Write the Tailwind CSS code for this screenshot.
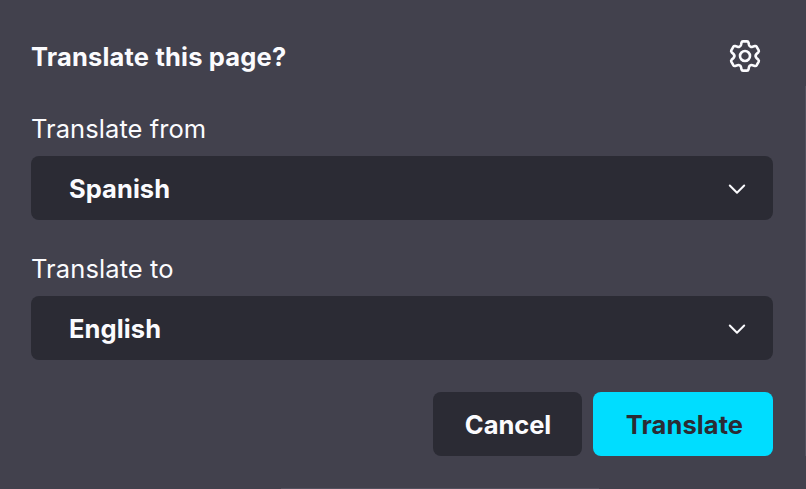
<!DOCTYPE html>
<html lang="en">
<head>
<meta charset="utf-8">
<title>Translate this page?</title>
<script src="https://cdn.jsdelivr.net/npm/@tailwindcss/browser@4"></script>
</head>
<body class="bg-[#42414d] font-['Inter',sans-serif] text-[#fbfbfe] text-[25.5px] leading-8">
<main class="relative flex h-[489px] w-[806px] flex-col overflow-hidden pl-[31px] pr-[33px]">
  <header class="flex h-[112px] items-center justify-between pr-3">
    <h1 class="pt-0.5 text-[25.5px] font-bold tracking-[0.18px]">Translate this page?</h1>
    <button aria-label="Settings" class="size-8">
      <svg class="size-8" viewBox="-16 -16 32 32" fill="none" stroke="currentColor" stroke-width="2.6" stroke-linejoin="round">
        <circle r="5"/>
        <path d="M-2 -14.6H2Q3.2 -14.6 3.5 -13.4L4 -11Q4.3 -9.8 5.6 -9.3Q6.5 -8.9 7.5 -9.2L9.9 -9.9Q11 -10.2 11.7 -9.2L13.7 -5.6Q14.2 -4.6 13.4 -3.8L11.5 -2Q9.6 0 11.5 2L13.4 3.8Q14.2 4.6 13.7 5.6L11.7 9.2Q11 10.2 9.9 9.9L7.5 9.2Q6.5 8.9 5.6 9.3Q4.3 9.8 4 11L3.5 13.4Q3.2 14.6 2 14.6H-2Q-3.2 14.6 -3.5 13.4L-4 11Q-4.3 9.8 -5.6 9.3Q-6.5 8.9 -7.5 9.2L-9.9 9.9Q-11 10.2 -11.7 9.2L-13.7 5.6Q-14.2 4.6 -13.4 3.8L-11.5 2Q-9.6 0 -11.5 -2L-13.4 -3.8Q-14.2 -4.6 -13.7 -5.6L-11.7 -9.2Q-11 -10.2 -9.9 -9.9L-7.5 -9.2Q-6.5 -8.9 -5.6 -9.3Q-4.3 -9.8 -4 -11L-3.5 -13.4Q-3.2 -14.6 -2 -14.6Z"/>
      </svg>
    </button>
  </header>
  <section class="flex h-[140px] flex-col">
    <p class="flex h-11 items-center pb-[10px] tracking-[0.06px]"><span>Translate from</span></p>
    <button class="flex h-16 w-full items-center justify-between rounded-lg bg-[#2b2b34] pt-0.5 pl-[38px] pr-[26px] font-bold">
      <span class="tracking-[0.05px]">Spanish</span>
      <svg class="h-5 w-5" viewBox="0 0 20 20" fill="none" stroke="currentColor" stroke-width="2" stroke-linecap="round" stroke-linejoin="round"><path d="M2.8 6.5L10 13.7L17.2 6.5"/></svg>
    </button>
  </section>
  <section class="flex h-[140px] flex-col">
    <p class="flex h-11 items-center pb-[10px] tracking-[0.1px]"><span>Translate to</span></p>
    <button class="flex h-16 w-full items-center justify-between rounded-lg bg-[#2b2b34] pt-0.5 pl-[38px] pr-[26px] font-bold">
      <span class="tracking-[0.1px]">English</span>
      <svg class="h-5 w-5" viewBox="0 0 20 20" fill="none" stroke="currentColor" stroke-width="2" stroke-linecap="round" stroke-linejoin="round"><path d="M2.8 6.5L10 13.7L17.2 6.5"/></svg>
    </button>
  </section>
  <footer class="flex justify-end gap-[11px]">
    <button class="h-16 w-[149px] rounded-lg bg-[#2b2b34] pt-0.5 pl-px font-bold tracking-[-0.05px]">Cancel</button>
    <button class="h-16 w-[180px] rounded-lg bg-[#00ddff] pt-0.5 pl-[3px] font-bold tracking-[0.08px] text-[#2b2b34]">Translate</button>
  </footer>
  <div class="absolute bottom-0 left-[281px] h-px w-[318px] bg-[#52515e]"></div>
  <div class="absolute right-0 top-[86px] h-[370px] w-px bg-[#52515e]"></div>
</main>
</body>
</html>
